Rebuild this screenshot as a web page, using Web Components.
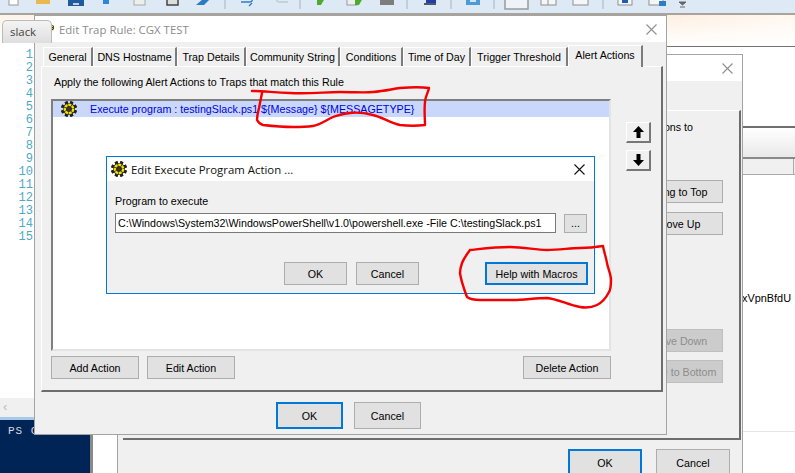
<!DOCTYPE html>
<html>
<head>
<meta charset="utf-8">
<title>Edit Trap Rule</title>
<style>
  html, body { margin: 0; padding: 0; width: 795px; height: 473px; overflow: hidden; background: #fff; }
  body { font: 10.7px "Liberation Sans", Arial, sans-serif; color: #000; }
  #desk { position: relative; width: 795px; height: 473px; overflow: hidden; }
</style>
</head>
<body>
<div id="desk">
  <ide-shell></ide-shell>

  <!-- window behind the trap rule dialog -->
  <win-dialog inactive style="--x:117px;--y:54px;--w:626px;--h:430px;--title:26px">
    <back-panel></back-panel>
  </win-dialog>

  <win-dialog inactive heading="Edit Trap Rule: CGX TEST" style="--x:34px;--y:15px;--w:633px;--h:420px;--title:26px">
    <stack-icon slot="icon"></stack-icon>
    <trap-rule-body></trap-rule-body>
  </win-dialog>

  <win-dialog active heading="Edit Execute Program Action ..." style="--x:106px;--y:156px;--w:489px;--h:138px;--title:24px">
    <gear-icon slot="icon"></gear-icon>
    <program-body></program-body>
  </win-dialog>

  <ink-marks></ink-marks>
</div>

<script>
// small helper so every class looks the same
function shadow(el, html) {
  el.attachShadow({ mode: 'open' }).innerHTML = html;
}

class IdeShell extends HTMLElement {
  connectedCallback() {
    let nums = '';
    for (let i = 1; i <= 15; i++) nums += `<div>${i}</div>`;
    shadow(this, `
      <style>
        :host { position: absolute; inset: 0; display: flex; flex-direction: column; }
        .tools { height: 13px; background: #dde9f5; border-bottom: 2px solid #a9a39d; flex: none; }
        .tools svg { display: block; filter: blur(.6px); }
        .tabs { height: 31px; flex: none; background: linear-gradient(90deg, #fdf4e9, #fdf4e9 60%, #fdf0e1 84%, #fff8f0); position: relative; display: flex; align-items: flex-end; padding: 0 0 3px 2px; box-sizing: border-box; }
        .tabs::after { content: ""; position: absolute; left: 0; right: 0; top: 0; bottom: 0; background: linear-gradient(#fff0, #fff 100%); }
        .tab { position: relative; z-index: 1; width: 50px; height: 23px; box-sizing: border-box; padding: 3px 0 0 7px; background: linear-gradient(#f4f4f4, #dedede); border: 1px solid #bbb; border-bottom: 0; border-radius: 5px 5px 0 0; font: 11.4px "Open Sans", sans-serif; color: #444; }
        .main { flex: 1; display: flex; min-height: 0; }
        .left { width: 93px; flex: none; display: flex; flex-direction: column; }
        .code { flex: 1; background: #fff; padding: 3px 60px 0 0; font: 12px/13px "Liberation Mono", monospace; color: #4fa9c4; text-align: right; }
        .hbar { height: 19px; background: #f0f0f0; color: #bbb; font: 13px/18px "Liberation Sans", sans-serif; padding-left: 3px; }
        .console { height: 56px; background: #012456; border-top: 3px solid #a9c9ea; border-right: 3px solid #8a8a8a; color: #ddd; font: 11px/16px "Liberation Mono", monospace; padding: 3px 0 0 8px; box-sizing: border-box; letter-spacing: 1px; }
        .right { flex: 1; display: flex; flex-direction: column; background: #fff; position: relative; border-top: 1px solid #77716c; }
        .spacer { height: 79px; flex: none; }
        .band { height: 29px; flex: none; border-top: 2px solid #6f6f6f; border-bottom: 2px solid #8a8a8a; background: linear-gradient(#fff, #e9e9e9); }
        .head { height: 15px; flex: none; background: #f0f0f0; border-bottom: 1px solid #aaa; display: flex; justify-content: flex-end; }
        .head i { width: 1px; background: #aaa; margin-right: 1px; }
        .text { padding: 116px 0 0 649px; font: 10.9px/14px "Liberation Sans", sans-serif; flex: 1; }
        .foot { height: 41px; flex: none; border-top: 1px solid #e6e6e6; }
      </style>
      <div class="tools">
        <svg width="795" height="13">
          <rect x="9" y="-2" width="9" height="7" fill="#fff" stroke="#9a9a9a"/>
          <rect x="36" y="-2" width="14" height="6" fill="#e9b94e"/>
          <rect x="68" y="-2" width="16" height="8" fill="#1d5b9e"/><rect x="73" y="3" width="6" height="2" fill="#ccd"/>
          <rect x="103" y="-2" width="6" height="6" fill="#2d86d6"/>
          <rect x="134" y="-2" width="11" height="7" fill="#eee" stroke="#aaa"/>
          <rect x="167" y="-2" width="11" height="7" fill="#ddd" stroke="#444" stroke-width="1.5"/>
          <path d="M196 5l7-6h7l-6 6z" fill="#2b7bc4"/>
          <path d="M225 0v9M300 0v9M407 0v9M451 0v9M494 0v9M603 0v9" stroke="#a8b3be"/>
          <path d="M241 2h8q4 0 3-3M249 6l3-3" fill="none" stroke="#2f7cc6" stroke-width="1.4"/>
          <path d="M288 2h-8q-4 0-3-3" fill="none" stroke="#bcc" stroke-width="1.4"/>
          <path d="M317 -2h8l-4 7h-4z" fill="#4caa2e"/>
          <rect x="347" y="-2" width="10" height="7" fill="#eee" stroke="#999"/><path d="M355 -2h8l-4 7h-4z" fill="#4caa2e"/>
          <rect x="380" y="-2" width="14" height="7" fill="#7d7d7d"/>
          <rect x="426" y="-2" width="10" height="5" fill="#1c3fa8"/><rect x="424" y="3" width="12" height="2" fill="#556"/>
          <rect x="466" y="-2" width="14" height="7" fill="#4d9bd6"/><rect x="470" y="0" width="6" height="2" fill="#cfe4f4"/>
          <rect x="505" y="-2" width="23" height="11" fill="#eef3f8" stroke="#9a9a9a" stroke-width="1.5"/>
          <rect x="541" y="-2" width="15" height="7" fill="#f4f6f8" stroke="#8f8f8f"/><path d="M548 -2v7" stroke="#8f8f8f"/>
          <rect x="573" y="-2" width="15" height="7" fill="#f4f6f8" stroke="#8f8f8f"/>
          <rect x="618" y="-2" width="14" height="7" fill="#f4f6f8" stroke="#8f8f8f"/><rect x="622" y="0" width="6" height="3" fill="#1d5fa8"/>
          <rect x="649" y="-2" width="14" height="7" fill="#f4f6f8" stroke="#8f8f8f"/><rect x="659" y="1" width="7" height="5" fill="#2f7cc6"/>
          <path d="M679 2h7l-3.500 3zM680 7h5" fill="#666" stroke="#666"/>
        </svg>
      </div>
      <div class="tabs"><div class="tab">slack</div></div>
      <div class="main">
        <div class="left">
          <div class="code">${nums}</div>
          <div class="hbar">‹</div>
          <div class="console">PS C:\\</div>
        </div>
        <div class="right">
          <div class="spacer"></div>
          <div class="band"></div>
          <div class="head"><i></i></div>
          <div class="text">xVpnBfdU</div>
          <div class="foot"></div>
        </div>
      </div>`);
  }
}

class WinDialog extends HTMLElement {
  connectedCallback() {
    const active = this.hasAttribute('active');
    shadow(this, `
      <style>
        :host { position: absolute; left: var(--x); top: var(--y); width: var(--w); height: var(--h); box-sizing: border-box; display: flex; flex-direction: column; background: #f0f0f0; border: 1px solid ${active ? '#0078d7' : '#a3a3a3'}; overflow: hidden; }
        .bar { height: var(--title); flex: none; background: #fff; display: flex; align-items: center; padding-left: 4px; gap: 4px; }
        .name { flex: 1; font: 11.4px "Open Sans", sans-serif; color: ${active ? '#111' : '#8c8c8c'}; white-space: nowrap; }
        svg { flex: none; margin-right: 9px; }
        .body { flex: 1; min-height: 0; display: flex; }
      </style>
      <div class="bar">
        <slot name="icon"></slot>
        <span class="name">${this.getAttribute('heading') || ''}</span>
        <svg width="11" height="11" viewBox="0 0 11 11"><path d="M.5 .5l10 10M10.500 .5l-10 10" stroke="${active ? '#111' : '#8f8f8f'}" stroke-width="1.100"/></svg>
      </div>
      <div class="body"><slot></slot></div>`);
  }
}

class WinButton extends HTMLElement {
  connectedCallback() {
    shadow(this, `
      <style>
        :host { display: flex; align-items: center; justify-content: center; box-sizing: border-box; width: var(--bw, 88px); height: var(--bh, 23px); flex: none; background: #e1e1e1; border: 1px solid #adadad; font: 10.7px "Liberation Sans", sans-serif; color: #000; white-space: nowrap; }
        :host([focused]) { border: 2px solid #0078d7; }
        :host([disabled]) { background: #cccccc; border-color: #bfbfbf; color: #8c8c8c; }
      </style>
      <slot></slot>`);
  }
}

class TrapRuleBody extends HTMLElement {
  connectedCallback() {
    const tabs = [['General', 50], ['DNS Hostname', 84], ['Trap Details', 69], ['Community String', 94], ['Conditions', 63], ['Time of Day', 68], ['Trigger Threshold', 97]];
    shadow(this, `
      <style>
        :host { flex: 1; display: flex; flex-direction: column; padding: 3px 0 0 6px; min-width: 0; font-size: 10.7px; }
        .tabs { display: flex; height: 21px; padding-left: 2px; align-items: flex-end; position: relative; z-index: 1; }
        .tab { box-sizing: border-box; height: 19px; display: flex; align-items: center; justify-content: center; padding-bottom: 1px; background: #f0f0f0; border-top: 1px solid #fff; border-left: 1px solid #fff; border-right: 2px solid #7c7c7c; white-space: nowrap; }
        .tab.on { height: 22px; margin-bottom: -1px; padding-bottom: 3px; }
        .panel { box-sizing: border-box; width: 622px; height: 326px; border: 1px solid #fff; border-right: 2px solid #6d6d6d; border-bottom: 2px solid #6d6d6d; display: grid; grid-template-columns: 560px 25px; column-gap: 15px; grid-template-rows: 32px 252px 28px; padding-left: 9px; }
        .label { grid-column: 1 / 3; padding: 9px 0 0 3px; }
        .list { background: #fff; border-top: 2px solid #7f7f7f; border-left: 2px solid #7f7f7f; border-right: 2px solid #e3e3e3; border-bottom: 2px solid #e3e3e3; box-sizing: border-box; }
        .row { height: 16px; background: #c9d8fa; display: flex; align-items: center; gap: 13px; padding-left: 8px; color: #0000e0; white-space: nowrap; }
        .updown { display: flex; flex-direction: column; gap: 7px; padding-top: 23px; }
        .arrow { box-sizing: border-box; width: 25px; height: 21px; background: #f0f0f0; border-top: 1px solid #fff; border-left: 1px solid #fff; border-right: 2px solid #777; border-bottom: 2px solid #777; display: flex; align-items: center; justify-content: center; }
        .actions { grid-column: 1; display: flex; gap: 8px; padding-top: 5px; }
        .actions .gap { flex: 1; }
        .foot { display: flex; gap: 11px; padding: 10px 0 0 235px; --bw: 67px; --bh: 27px; }
      </style>
      <div class="tabs">
        ${tabs.map(t => `<div class="tab" style="width:${t[1]}px">${t[0]}</div>`).join('')}
        <div class="tab on" style="width:75px">Alert Actions</div>
      </div>
      <div class="panel">
        <div class="label">Apply the following Alert Actions to Traps that match this Rule</div>
        <div class="list"><div class="row"><gear-icon></gear-icon><span>Execute program : testingSlack.ps1 \${Message} \${MESSAGETYPE}</span></div></div>
        <div class="updown">
          <div class="arrow"><svg width="11" height="12" viewBox="0 0 11 12"><path d="M5.500 0L11 6H7.500V12H3.500V6H0z"/></svg></div>
          <div class="arrow"><svg width="11" height="12" viewBox="0 0 11 12"><path d="M5.500 12L11 6H7.500V0H3.500V6H0z"/></svg></div>
        </div>
        <div class="actions">
          <win-button>Add Action</win-button>
          <win-button>Edit Action</win-button>
          <span class="gap"></span>
          <win-button>Delete Action</win-button>
        </div>
      </div>
      <div class="foot">
        <win-button focused>OK</win-button>
        <win-button>Cancel</win-button>
      </div>`);
  }
}

class ProgramBody extends HTMLElement {
  connectedCallback() {
    shadow(this, `
      <style>
        :host { flex: 1; display: flex; flex-direction: column; padding: 14px 6px 0 8px; min-width: 0; font-size: 10.7px; }
        .field { display: flex; gap: 8px; margin-top: 6px; align-items: center; }
        .input { box-sizing: border-box; width: 441px; height: 20px; background: #fff; border: 1px solid #7a7a7a; padding-left: 2px; line-height: 18px; white-space: nowrap; overflow: hidden; }
        .more { --bw: 23px; --bh: 19px; }
        .buttons { display: flex; margin-top: 29px; padding-left: 169px; gap: 9px; --bw: 63px; }
        .gap { flex: 1; }
        .help { --bw: 103px; }
      </style>
      <div>Program to execute</div>
      <div class="field">
        <div class="input">C:\\Windows\\System32\\WindowsPowerShell\\v1.0\\powershell.exe -File C:\\testingSlack.ps1</div>
        <win-button class="more">...</win-button>
      </div>
      <div class="buttons">
        <win-button>OK</win-button>
        <win-button>Cancel</win-button>
        <span class="gap"></span>
        <win-button class="help" focused>Help with Macros</win-button>
      </div>`);
  }
}

class BackPanel extends HTMLElement {
  connectedCallback() {
    shadow(this, `
      <style>
        :host { flex: 1; display: flex; flex-direction: column; padding: 29px 1px 0 5px; min-width: 0; font-size: 10.7px; }
        .panel { box-sizing: border-box; height: 330px; flex: none; border-top: 1px solid #fff; border-right: 2px solid #6d6d6d; border-bottom: 2px solid #6d6d6d; display: flex; flex-direction: column; align-items: flex-end; padding-right: 16px; }
        .note { margin: 9px 30px 0 0; line-height: 14px; }
        .top { margin-top: 46px; }
        .dn { margin-top: 94px; }
        .foot { display: flex; justify-content: flex-end; gap: 14px; padding: 9px 11px 0 0; --bw: 74px; --bh: 28px; }
      </style>
      <div class="panel">
        <div class="note">Actions to</div>
        <win-button class="top">Bring to Top</win-button>
        <win-button style="margin-top:9px">Move Up</win-button>
        <win-button class="dn" disabled>Move Down</win-button>
        <win-button style="margin-top:8px" disabled>Move to Bottom</win-button>
      </div>
      <div class="foot">
        <win-button focused>OK</win-button>
        <win-button>Cancel</win-button>
      </div>`);
  }
}

class GearIcon extends HTMLElement {
  connectedCallback() {
    let teeth = '';
    for (let a = 0; a < 8; a++) {
      teeth += `<rect x="6.500" y="0" width="3" height="16" fill="#222" transform="rotate(${a * 45 + 22.5} 8 8)"/>`;
    }
    shadow(this, `
      <style>:host { display: inline-flex; width: 16px; height: 16px; flex: none; }</style>
      <svg width="16" height="16" viewBox="0 0 16 16">
        ${teeth}
        <circle cx="8" cy="8" r="6" fill="#2a2a10"/>
        <circle cx="8" cy="8" r="4.200" fill="none" stroke="#f2dc12" stroke-width="2.400" stroke-dasharray="3 .7"/>
        <circle cx="8" cy="8" r="2" fill="#3a3a20"/>
      </svg>`);
  }
}

class StackIcon extends HTMLElement {
  connectedCallback() {
    shadow(this, `
      <style>:host { display: inline-flex; width: 16px; height: 16px; flex: none; }</style>
      <svg width="16" height="16" viewBox="0 0 16 16">
        <path d="M1 9L10 2l5 3v3L6 15l-5-3z" fill="#2b2b10"/>
        <path d="M1.500 9L10 2.500l4.500 2.700L6 11.800z" fill="#f5e23a"/>
        <path d="M2 11l4 2.300 8.500-6.500" fill="none" stroke="#d6b71d" stroke-width="1"/>
      </svg>`);
  }
}

// the red pen marks drawn over the screenshot
class InkMarks extends HTMLElement {
  connectedCallback() {
    shadow(this, `
      <style>:host { position: absolute; inset: 0; pointer-events: none; } svg { display: block; }</style>
      <svg width="795" height="473" fill="none" stroke="#f40000" stroke-width="2.400" stroke-linecap="round" stroke-linejoin="round">
        <path d="M252 91C262 91 270 92 290 93C310 94 325 92 340 92C355 92 365 93 373 92C385 91 392 89 400 88C412 87 422 87 429 88C428 93 425 97 425 102C424 110 425 118 425 125C417 126 408 126 400 125C390 123 382 117 373 115C365 113 358 112 350 113C343 114 338 115 333 117C326 120 320 125 313 126C305 127 300 127 293 127C282 127 272 126 263 125C260 124 258 122 257 120C257 115 258 112 259 108C260 103 261 98 262 93"/>
        <path d="M470 250C480 249 495 247 510 247C525 247 535 250 547 250C560 250 570 248 580 248C590 248 597 247 603 246C604 252 606 257 607 263C608 269 611 274 611 280C611 285 611 289 609 292C606 298 601 303 597 305C591 308 586 308 580 307C568 305 558 299 547 298C535 298 525 300 513 300C502 300 490 300 480 300C475 300 470 299 467 297C464 289 461 281 460 273C460 269 461 266 462 263C464 258 467 254 470 250"/>
      </svg>`);
  }
}

customElements.define('ide-shell', IdeShell);
customElements.define('win-dialog', WinDialog);
customElements.define('win-button', WinButton);
customElements.define('trap-rule-body', TrapRuleBody);
customElements.define('program-body', ProgramBody);
customElements.define('back-panel', BackPanel);
customElements.define('gear-icon', GearIcon);
customElements.define('stack-icon', StackIcon);
customElements.define('ink-marks', InkMarks);
</script>
</body>
</html>
